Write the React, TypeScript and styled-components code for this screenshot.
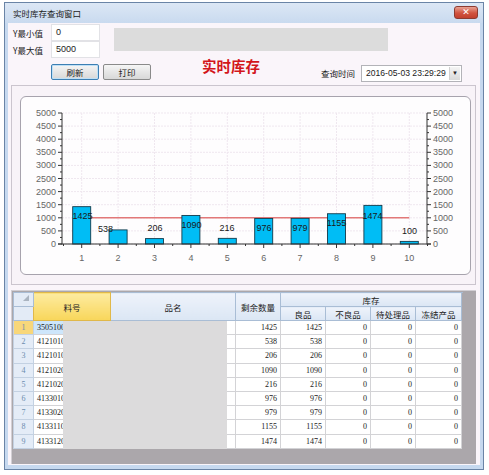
import React from 'react';
import styled, { createGlobalStyle, css } from 'styled-components';

const cjk = `"Noto Sans CJK SC", "Liberation Sans", sans-serif`;
const numFont = `"Liberation Serif", "Noto Sans CJK SC", serif`;

const GlobalStyle = createGlobalStyle`
  html, body {
    margin: 0;
    padding: 0;
    background: #ffffff;
  }
  body {
    font-family: ${cjk};
    font-size: 9px;
    color: #222;
  }
`;

const chartValues = [1425, 538, 206, 1090, 216, 976, 979, 1155, 1474, 100];

// label positions read off the reference (x centre, y centre)
const valueLabels: [number, number][] = [
  [82.5, 216], [105.5, 229], [155, 228], [191.5, 225], [227, 228],
  [264, 228], [300, 228], [336.5, 223], [372.5, 216], [409.5, 231],
];

const rows: [string, number][] = [
  ['35051001', 1425],
  ['41210101', 538],
  ['41210102', 206],
  ['41210201', 1090],
  ['41210202', 216],
  ['41330101', 976],
  ['41330201', 979],
  ['41331101', 1155],
  ['41331201', 1474],
];

const Window = styled.div`
  margin: 2px 0 0 4px;
  width: 480px;
  box-sizing: border-box;
  border: 1px solid #6a84a6;
  background: #c6d9ef;
  padding-bottom: 4px;
`;

const TitleBar = styled.div`
  height: 20px;
  display: flex;
  align-items: center;
  padding: 0 5px 0 8px;
  background: linear-gradient(#dce7f5, #c9daef);
`;

const TitleText = styled.span`
  flex: 1;
  font-size: 8.5px;
  color: #1c1c1c;
`;

const CloseButton = styled.div`
  width: 22px;
  height: 11px;
  border: 1px solid #8c3b31;
  border-radius: 3px;
  background: linear-gradient(#e9a293, #d1533f 55%, #c2402f);
  color: #fff;
  font-family: "DejaVu Sans", sans-serif;
  font-weight: bold;
  font-size: 9px;
  line-height: 11px;
  text-align: center;
  margin-top: -2px;
`;

const Client = styled.div`
  margin: 0 3px;
  height: 442px;
  background: #faf5fa;
  display: flex;
  flex-direction: column;
`;

const TopPanel = styled.div`
  height: 62px;
  box-sizing: border-box;
  padding: 1px 0 0 5px;
`;

const TopRow = styled.div`
  display: flex;
  align-items: flex-start;
`;

const Fields = styled.div`
  display: flex;
  flex-direction: column;
`;

const FieldRow = styled.div`
  display: flex;
  align-items: center;
  height: 17px;
`;

const FieldLabel = styled.span`
  width: 38px;
  font-size: 8.5px;
  color: #222;
`;

const TextBox = styled.div`
  width: 49px;
  height: 17px;
  box-sizing: border-box;
  background: #fff;
  border: 1px solid #e2e2e6;
  padding-left: 4px;
  font-family: "Liberation Sans", sans-serif;
  font-size: 9px;
  line-height: 15px;
`;

const Redacted = styled.div`
  margin: 4px 0 0 14px;
  width: 274px;
  height: 23px;
  background: #dcdcdc;
`;

const ActionRow = styled.div`
  display: flex;
  align-items: center;
  height: 20px;
  margin-top: 4px;
`;

const Button = styled.div<{ $focused?: boolean; $gap: number }>`
  width: 48px;
  height: 16px;
  box-sizing: border-box;
  margin-left: ${({ $gap }) => $gap}px;
  border: 1px solid ${({ $focused }) => ($focused ? '#3d7fb3' : '#8a8a8a')};
  border-radius: 2px;
  background: linear-gradient(#f6f6f6, #e6e6e6 50%, #d8d8d8);
  font-size: 8.5px;
  line-height: 14px;
  text-align: center;
  ${({ $focused }) =>
    $focused &&
    css`
      box-shadow: inset 0 0 0 1px #bfe0f6;
    `}
`;

const BigTitle = styled.div`
  align-self: flex-start;
  margin: -4px 0 0 51px;
  font-size: 14.5px;
  line-height: 15px;
  font-weight: bold;
  color: #d3161a;
`;

const Spacer = styled.div`
  flex: 1;
`;

const QueryLabel = styled.span`
  font-size: 8.5px;
  margin: 2px 6px 0 0;
`;

const DateBox = styled.div`
  width: 101px;
  height: 17px;
  box-sizing: border-box;
  margin: 2px 18px 0 0;
  background: #fff;
  border: 1px solid #b3b3b8;
  display: flex;
  align-items: center;
  padding: 0 1px 0 4px;
  font-family: "Liberation Sans", sans-serif;
  font-size: 8.6px;
`;

const DateText = styled.span`
  flex: 1;
`;

const DropButton = styled.div`
  width: 10px;
  height: 13px;
  background: linear-gradient(#f4f4f4, #d9d9d9);
  border-left: 1px solid #d0d0d0;
  font-size: 6px;
  line-height: 13px;
  text-align: center;
  color: #222;
`;

const ChartOuter = styled.div`
  margin: 0 4px 0 3px;
  height: 200px;
  box-sizing: border-box;
  border: 1px solid #cbc5ce;
  background: #f8f3f8;
  padding: 10px 4px 9px 8px;
`;

const ChartCard = styled.div`
  height: 179px;
  box-sizing: border-box;
  border: 1px solid #a7a3ad;
  border-radius: 6px;
  background: #fefdfe;
  overflow: hidden;
`;

const GridPanel = styled.div`
  margin: 5px 4px 0 3px;
  height: 174px;
  box-sizing: border-box;
  background: #aba7ab;
  border-top: 1px solid #d2cfd4;
  border-left: 1px solid #d2cfd4;
  padding: 1px 0 0 1px;
  position: relative;
  overflow: hidden;
`;

const Table = styled.table`
  border-collapse: collapse;
  table-layout: fixed;
  width: 448px;
  background: #fff;
`;

const headBase = css`
  height: 13px;
  padding: 0;
  font-size: 8.5px;
  font-weight: normal;
  color: #222;
  text-align: center;
  border: 1px solid #a9bdd5;
  background: linear-gradient(#eef3fb, #dbe6f4);
  white-space: nowrap;
  overflow: hidden;
`;

const HeadCell = styled.th<{ $active?: boolean }>`
  ${headBase};
  ${({ $active }) =>
    $active &&
    css`
      background: linear-gradient(#fdeba0, #f8d65a);
      border-color: #e0b84a;
    `}
`;

const CornerCell = styled.th<{ $marked?: boolean }>`
  ${headBase};
  background: #e3ebf6;
  position: relative;
  ${({ $marked }) =>
    $marked &&
    css`
      &::after {
        content: '';
        position: absolute;
        right: 4px;
        bottom: 5px;
        border-style: solid;
        border-width: 0 0 6px 6px;
        border-color: transparent transparent #aab4c0 transparent;
      }
    `}
`;

const DataRow = styled.tr`
  height: 14.2px;
`;

const RowHead = styled.td<{ $active?: boolean }>`
  padding: 0;
  font-family: ${numFont};
  font-size: 8px;
  text-align: center;
  color: #6d8cae;
  border: 1px solid #c3d1e2;
  background: ${({ $active }) => ($active ? '#f8d77a' : '#e4ecf7')};
`;

const Cell = styled.td<{ $num?: boolean; $selected?: boolean }>`
  padding: 0 3px;
  font-family: ${numFont};
  font-size: 8px;
  color: #1a1a1a;
  border: 1px solid #d3d3d6;
  text-align: ${({ $num }) => ($num ? 'right' : 'left')};
  white-space: nowrap;
  overflow: hidden;
  background: ${({ $selected }) => ($selected ? '#cde6fb' : '#fff')};
`;

const GridMask = styled.div`
  position: absolute;
  left: 51px;
  top: 30px;
  width: 164px;
  height: 128px;
  background: #dcdbdc;
`;

const yOf = (v: number) => 244 - (v * 131) / 5000;
const cx = (i: number) => 63.5 + 36.4 * (i + 0.5);

function Chart() {
  const majors = Array.from({ length: 11 }, (_, k) => k * 500);
  const minors = Array.from({ length: 20 }, (_, k) => k * 250 + 250).filter((v) => v % 500 !== 0);
  return (
    <svg width="449" height="177" viewBox="21 97 449 177" style={{ display: 'block' }}>
      {majors.map((v) => (
        <line key={`h${v}`} x1="62" x2="427" y1={yOf(v)} y2={yOf(v)} stroke="#efe7ef" strokeDasharray="2 1" />
      ))}
      {chartValues.map((_, i) => (
        <line key={`v${i}`} x1={cx(i)} x2={cx(i)} y1="113" y2="244" stroke="#efe7ef" strokeDasharray="2 1" />
      ))}
      <line x1={cx(0)} x2={cx(9)} y1={yOf(1000)} y2={yOf(1000)} stroke="#e27878" strokeWidth="1.4" />
      {chartValues.map((v, i) => (
        <rect
          key={`b${i}`}
          x={cx(i) - 9}
          y={yOf(v)}
          width="18"
          height={244 - yOf(v)}
          fill="#00bdf5"
          stroke="#123a4a"
          strokeWidth="0.9"
        />
      ))}
      {/* axes */}
      <g stroke="#333" strokeWidth="1">
        <line x1="62" x2="62" y1="113" y2="244.5" />
        <line x1="427" x2="427" y1="113" y2="244.5" />
        <line x1="58" x2="431" y1="244" y2="244" />
        {majors.map((v) => (
          <React.Fragment key={`t${v}`}>
            <line x1="58" x2="62" y1={yOf(v)} y2={yOf(v)} />
            <line x1="427" x2="431" y1={yOf(v)} y2={yOf(v)} />
          </React.Fragment>
        ))}
        {minors.map((v) => (
          <React.Fragment key={`m${v}`}>
            <line x1="60" x2="62" y1={yOf(v)} y2={yOf(v)} />
            <line x1="427" x2="429" y1={yOf(v)} y2={yOf(v)} />
          </React.Fragment>
        ))}
        {chartValues.map((_, i) => (
          <line key={`xt${i}`} x1={cx(i)} x2={cx(i)} y1="244" y2="248" />
        ))}
        {Array.from({ length: 11 }, (_, k) => (
          <line key={`xm${k}`} x1={63.5 + 36.4 * k} x2={63.5 + 36.4 * k} y1="244" y2="246" />
        ))}
      </g>
      <g fontFamily="Liberation Sans, sans-serif" fontSize="9" fill="#666">
        {majors.map((v) => (
          <React.Fragment key={`l${v}`}>
            <text x="56" y={yOf(v) + 3} textAnchor="end">{v}</text>
            <text x="433" y={yOf(v) + 3}>{v}</text>
          </React.Fragment>
        ))}
        {chartValues.map((_, i) => (
          <text key={`xl${i}`} x={cx(i)} y="261" textAnchor="middle">{i + 1}</text>
        ))}
      </g>
      <g fontFamily="Liberation Sans, sans-serif" fontSize="9" fill="#1a1a1a">
        {chartValues.map((v, i) => (
          <text key={`vl${i}`} x={valueLabels[i][0]} y={valueLabels[i][1] + 3} textAnchor="middle">{v}</text>
        ))}
      </g>
    </svg>
  );
}

export default function App() {
  return (
    <>
      <GlobalStyle />
      <Window>
        <TitleBar>
          <TitleText>实时库存查询窗口</TitleText>
          <CloseButton>✕</CloseButton>
        </TitleBar>
        <Client>
          <TopPanel>
            <TopRow>
              <Fields>
                <FieldRow>
                  <FieldLabel>Y最小值</FieldLabel>
                  <TextBox>0</TextBox>
                </FieldRow>
                <FieldRow>
                  <FieldLabel>Y最大值</FieldLabel>
                  <TextBox>5000</TextBox>
                </FieldRow>
              </Fields>
              <Redacted />
            </TopRow>
            <ActionRow>
              <Button $focused $gap={38}>刷新</Button>
              <Button $gap={4}>打印</Button>
              <BigTitle>实时库存</BigTitle>
              <Spacer />
              <QueryLabel>查询时间</QueryLabel>
              <DateBox>
                <DateText>2016-05-03 23:29:29</DateText>
                <DropButton>▼</DropButton>
              </DateBox>
            </ActionRow>
          </TopPanel>
          <ChartOuter>
            <ChartCard>
              <Chart />
            </ChartCard>
          </ChartOuter>
          <GridPanel>
            <Table>
              <colgroup>
                <col style={{ width: 20 }} />
                <col style={{ width: 77 }} />
                <col style={{ width: 125 }} />
                <col style={{ width: 45 }} />
                <col style={{ width: 45 }} />
                <col style={{ width: 45 }} />
                <col style={{ width: 45 }} />
                <col style={{ width: 46 }} />
              </colgroup>
              <thead>
                <tr>
                  <CornerCell $marked />
                  <HeadCell rowSpan={2} $active>料号</HeadCell>
                  <HeadCell rowSpan={2}>品名</HeadCell>
                  <HeadCell rowSpan={2}>剩余数量</HeadCell>
                  <HeadCell colSpan={5}>库存</HeadCell>
                </tr>
                <tr>
                  <CornerCell />
                  <HeadCell>良品</HeadCell>
                  <HeadCell>不良品</HeadCell>
                  <HeadCell>待处理品</HeadCell>
                  <HeadCell>冻结产品</HeadCell>
                </tr>
              </thead>
              <tbody>
                {rows.map(([code, qty], i) => (
                  <DataRow key={code + i}>
                    <RowHead $active={i === 0}>{i + 1}</RowHead>
                    <Cell $selected={i === 0}>{code}</Cell>
                    <Cell />
                    <Cell $num>{qty}</Cell>
                    <Cell $num>{qty}</Cell>
                    <Cell $num>0</Cell>
                    <Cell $num>0</Cell>
                    <Cell $num>0</Cell>
                  </DataRow>
                ))}
              </tbody>
            </Table>
            <GridMask />
          </GridPanel>
        </Client>
      </Window>
    </>
  );
}
